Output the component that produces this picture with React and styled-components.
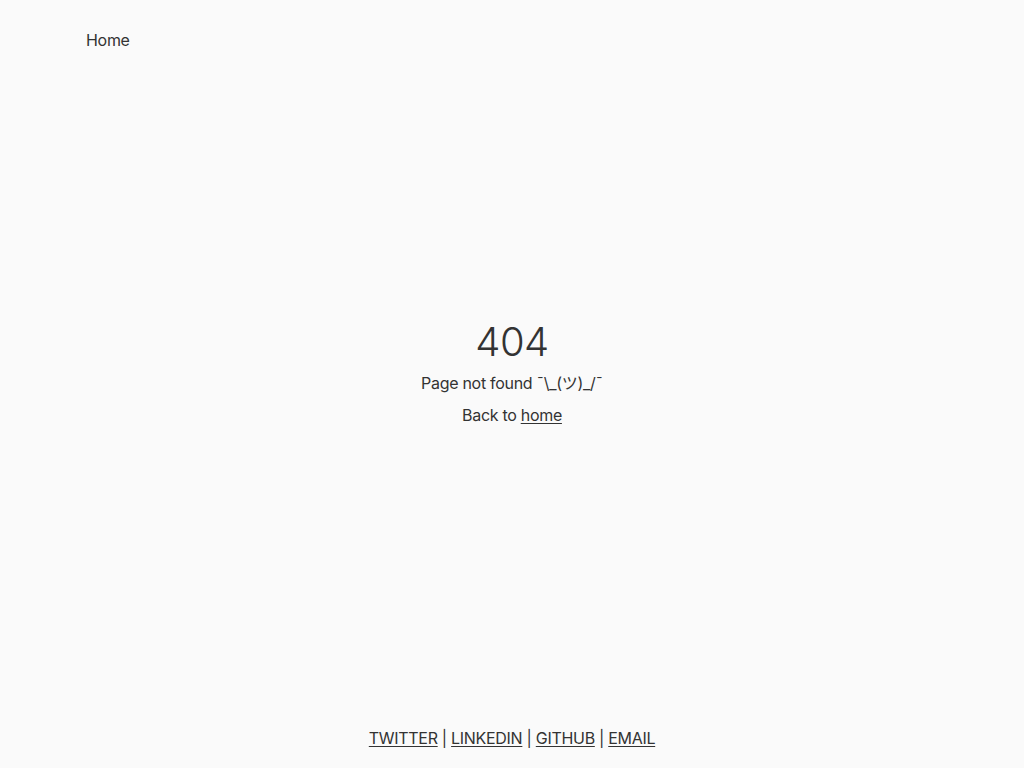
import React from 'react'
import styled, { createGlobalStyle } from 'styled-components'

const GlobalStyle = createGlobalStyle`
  html, body {
    margin: 0;
    padding: 0;
    background: #fafafa;
  }
  body {
    font-family: Inter, "Noto Sans CJK JP", sans-serif;
    color: #333;
    font-size: 16px;
    letter-spacing: -0.3px;
  }
`

const Page = styled.div`
  min-height: 100vh;
  display: flex;
  flex-direction: column;
`
const Header = styled.header`
  padding: 30px 86px 0;
  height: 50px;
  box-sizing: border-box;
`
const NavLink = styled.a`
  color: #333;
  text-decoration: none;
  font-size: 16px;
  line-height: 20px;
`
const Main = styled.main`
  flex: 1;
  display: flex;
  flex-direction: column;
  align-items: center;
  justify-content: center;
  padding-bottom: 32px;
`
const Title = styled.h1`
  margin: 0;
  font-size: 40px;
  font-weight: 300;
  line-height: 50px;
  letter-spacing: -0.5px;
`
const Text = styled.p`
  margin: ${(p) => p.top || 0}px 0 0;
  font-size: 16px;
  line-height: 24px;
`
const Link = styled.a`
  color: #333;
  text-decoration: underline;
  text-underline-offset: 2px;
`
const Footer = styled.footer`
  text-align: center;
  padding: 0 0 18px;
  font-size: 16px;
  line-height: 24px;
  white-space: pre;
`

export default function App() {
  const links = ['TWITTER', 'LINKEDIN', 'GITHUB', 'EMAIL']
  return (
    <>
      <GlobalStyle />
      <Page>
        <Header>
          <NavLink href="#">Home</NavLink>
        </Header>
        <Main>
          <Title>404</Title>
          <Text top={4}>Page not found ¯\_(ツ)_/¯</Text>
          <Text top={8}>
            Back to <Link href="#">home</Link>
          </Text>
        </Main>
        <Footer>
          {links.map((l, i) => (
            <React.Fragment key={l}>
              {i > 0 && ' | '}
              <Link href="#">{l}</Link>
            </React.Fragment>
          ))}
        </Footer>
      </Page>
    </>
  )
}
